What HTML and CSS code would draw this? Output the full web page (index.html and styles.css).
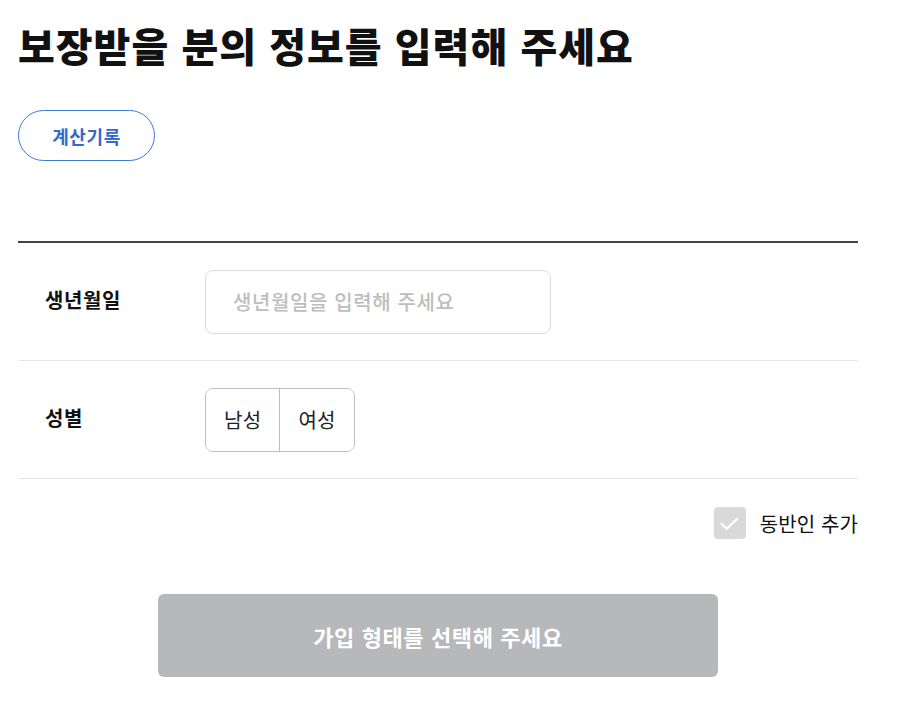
FILE: index.html
```html
<!DOCTYPE html>
<html lang="ko">
<head>
<meta charset="utf-8">
<link rel="stylesheet" href="styles.css">
</head>
<body>
<div class="page">
  <h1 class="title">보장받을 분의 정보를 입력해 주세요</h1>
  <button class="history-btn" type="button">계산기록</button>
  <div class="form">
    <div class="row">
      <div class="label">생년월일</div>
      <div class="field"><input class="text-input" type="text" placeholder="생년월일을 입력해 주세요"></div>
    </div>
    <div class="row">
      <div class="label">성별</div>
      <div class="field">
        <div class="segment">
          <button class="seg-btn" type="button">남성</button>
          <button class="seg-btn" type="button">여성</button>
        </div>
      </div>
    </div>
  </div>
  <div class="companion">
    <span class="check"><svg width="32" height="32" viewBox="0 0 32 32"><path d="M7.5 16.8 L12.8 21.8 L23.2 11.6" fill="none" stroke="#fff" stroke-width="2.2" stroke-linecap="round" stroke-linejoin="round"/></svg></span>
    <span class="companion-label">동반인 추가</span>
  </div>
  <div class="submit-wrap">
    <button class="submit" type="button">가입 형태를 선택해 주세요</button>
  </div>
</div>
</body>
</html>
```

FILE: styles.css
```css
* { box-sizing: border-box; }
body {
  margin: 0;
  background: #fff;
  font-family: "Noto Sans CJK KR", "Noto Sans", sans-serif;
  color: #111;
}
.page {
  width: 876px;
  padding: 0 18px;
}
.title {
  margin: 17px 0 0;
  font-size: 40px;
  line-height: 56px;
  font-weight: 800;
  letter-spacing: 1px;
  color: #111;
}
.history-btn {
  margin-top: 37px;
  width: 137px;
  height: 51px;
  border: 1px solid #3b78d8;
  border-radius: 26px;
  background: #fff;
  color: #2f6bd0;
  font-family: inherit;
  font-size: 18px;
  font-weight: 700;
  letter-spacing: 0.6px;
  padding: 0;
}
.form {
  margin-top: 80px;
  border-top: 2px solid #444;
}
.row {
  display: flex;
  align-items: center;
  height: 118px;
  border-bottom: 1px solid #e6e6e6;
}
.label {
  width: 187px;
  padding-left: 27px;
  padding-bottom: 4px;
  font-size: 20px;
  font-weight: 700;
  letter-spacing: 0.6px;
  color: #111;
}
.text-input {
  width: 346px;
  height: 64px;
  border: 1px solid #dcdcdc;
  border-radius: 8px;
  padding: 0 27px;
  font-family: inherit;
  font-size: 20px;
  letter-spacing: 0.6px;
  outline: none;
}
.text-input::placeholder {
  color: #bdbdbd;
  font-weight: 500;
}
.segment {
  display: flex;
  height: 64px;
  border: 1px solid #bdbdbd;
  border-radius: 8px;
  overflow: hidden;
}
.seg-btn {
  background: #fff;
  border: 0;
  padding: 0 18px;
  font-family: inherit;
  font-size: 20px;
  color: #222;
  letter-spacing: 0.3px;
}
.seg-btn + .seg-btn {
  border-left: 1px solid #bdbdbd;
}
.companion {
  display: flex;
  justify-content: flex-end;
  align-items: center;
  gap: 14px;
  margin-top: 28px;
}
.check {
  width: 32px;
  height: 32px;
  border-radius: 4px;
  background: #d9d9da;
  display: flex;
}
.companion-label {
  font-size: 20px;
  color: #111;
  letter-spacing: 0.1px;
}
.submit-wrap {
  display: flex;
  justify-content: center;
  margin-top: 55px;
}
.submit {
  width: 560px;
  height: 83px;
  border: 0;
  border-radius: 6px;
  background: #b7b8ba;
  color: #fff;
  font-family: inherit;
  font-size: 22px;
  font-weight: 700;
  letter-spacing: 0.6px;
}
```
